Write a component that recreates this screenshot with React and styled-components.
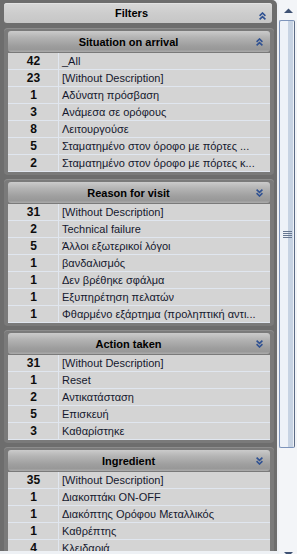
import React from 'react';
import styled, { createGlobalStyle } from 'styled-components';

const GlobalStyle = createGlobalStyle`
  html, body { margin: 0; padding: 0; background: #eef1f5; }
  body { font-family: "Liberation Sans", Arial, sans-serif; font-size: 11px; }
  * { box-sizing: border-box; }
`;

const Window = styled.div`
  display: flex;
  width: 297px;
  height: 554px;
  overflow: hidden;
  background: #eef1f5;
`;

const Panel = styled.div`
  flex: none;
  width: 277px;
  height: 551px;
  overflow: hidden;
  background: #6d6d6d;
  border-top-right-radius: 5px;
  padding: 3px 0 0 4px;
  display: flex;
  flex-direction: column;
  gap: 4px;
`;

const FiltersHeader = styled.div`
  flex: none;
  height: 20px;
  margin-right: 5px;
  margin-bottom: 1px;
  border-radius: 3px;
  background: linear-gradient(to bottom, #d8d8d8 0%, #cdcdcd 50%, #c6c6c6 100%);
  box-shadow: inset 0 1px 0 #e2e2e2;
  display: flex;
  align-items: center;
`;

const Title = styled.div`
  flex: 1;
  text-align: center;
  font-weight: bold;
  font-size: 11px;
  color: #000;
  padding-left: ${p => p.$shift || 0}px;
  white-space: nowrap;
`;

const ChevronBox = styled.div`
  flex: none;
  width: ${p => p.$w}px;
  display: flex;
  justify-content: center;
  align-items: center;
  margin-top: ${p => p.$drop || 0}px;
`;

const SectionFrame = styled.div`
  flex: none;
  margin-right: 3px;
  padding: 3px 4px;
  background: #7a7a7a;
  border-radius: 4px;
  box-shadow: inset 0 1px 0 #8c8c8c;
`;

const SectionHeader = styled.div`
  height: 21px;
  border-radius: 3px;
  background: linear-gradient(to bottom, #cbcbcb 0%, #b4b4b4 30%, #9e9e9e 70%, #989898 88%, #acacac 100%);
  display: flex;
  align-items: center;
`;

const Rows = styled.div`
  margin-top: 1px;
  background: #d4d4d4;
`;

const Row = styled.div`
  height: 17px;
  display: grid;
  grid-template-columns: 50px 1fr;
  border-bottom: 1px solid #e0e6ef;
`;

const Count = styled.div`
  text-align: center;
  font-weight: bold;
  font-size: 12px;
  padding-left: 1px;
  line-height: 16px;
  color: #0d0d0d;
`;

const Label = styled.div`
  border-left: 1px solid #e0e6ef;
  padding-left: 3px;
  font-size: 11px;
  line-height: 16px;
  color: #15182e;
  white-space: nowrap;
  overflow: hidden;
`;

const ScrollBar = styled.div`
  flex: none;
  margin-left: 2px;
  width: 18px;
  height: 554px;
  overflow: hidden;
  background: #f3f5f8;
  display: flex;
  flex-direction: column;
`;

const ScrollButton = styled.div`
  flex: none;
  height: 20px;
  display: flex;
  align-items: center;
  justify-content: center;
  margin-bottom: ${p => (p.$cut ? -10 : 0)}px;
`;

const Thumb = styled.div`
  flex: none;
  height: 428px;
  width: 16px;
  border: 1px solid #7d94bb;
  border-right-color: #5d6c86;
  border-radius: 2px;
  background: linear-gradient(to right, #eef2f8 0, #eef2f8 8px, #c7d3e3 8px, #c7d3e3 13px, #eef2f8 13px);
  display: flex;
  flex-direction: column;
  align-items: center;
  justify-content: center;
  gap: 1px;
`;

const GripLine = styled.div`
  width: 9px;
  height: 1px;
  background: #687892;
  margin-left: 1px;
`;

const Track = styled.div`
  flex: 1;
`;

const Chevron = ({ up }) => (
  <svg width="7" height="8" viewBox="0 0 7 8">
    {up ? (
      <g fill="none" stroke="#2f5192" strokeWidth="1.6">
        <path d="M0.6 3.8 L3.5 1 L6.4 3.8" />
        <path d="M0.6 7.4 L3.5 4.6 L6.4 7.4" />
      </g>
    ) : (
      <g fill="none" stroke="#2f5192" strokeWidth="1.6">
        <path d="M0.6 0.6 L3.5 3.4 L6.4 0.6" />
        <path d="M0.6 4.2 L3.5 7 L6.4 4.2" />
      </g>
    )}
  </svg>
);

const Arrow = ({ up }) => (
  <svg width="9" height="5" viewBox="0 0 9 5">
    <polygon points={up ? '0,5 4.5,0.5 9,5' : '0,0 4.5,4.5 9,0'} fill="#3f5273" />
  </svg>
);

const sections = [
  {
    title: 'Situation on arrival',
    up: true,
    rows: [
      [42, '_All'],
      [23, '[Without Description]'],
      [1, 'Αδύνατη πρόσβαση'],
      [3, 'Ανάμεσα σε ορόφους'],
      [8, 'Λειτουργούσε'],
      [5, 'Σταματημένο στον όροφο με πόρτες ...'],
      [2, 'Σταματημένο στον όροφο με πόρτες κ...'],
    ],
  },
  {
    title: 'Reason for visit',
    up: false,
    rows: [
      [31, '[Without Description]'],
      [2, 'Technical failure'],
      [5, 'Άλλοι εξωτερικοί λόγοι'],
      [1, 'βανδαλισμός'],
      [1, 'Δεν βρέθηκε σφάλμα'],
      [1, 'Εξυπηρέτηση πελατών'],
      [1, 'Φθαρμένο εξάρτημα (προληπτική αντι...'],
    ],
  },
  {
    title: 'Action taken',
    up: false,
    rows: [
      [31, '[Without Description]'],
      [1, 'Reset'],
      [2, 'Αντικατάσταση'],
      [5, 'Επισκευή'],
      [3, 'Καθαρίστηκε'],
    ],
  },
  {
    title: 'Ingredient',
    up: false,
    rows: [
      [35, '[Without Description]'],
      [1, 'Διακοπτάκι ON-OFF'],
      [1, 'Διακόπτης Ορόφου Μεταλλικός'],
      [1, 'Καθρέπτης'],
      [4, 'Κλειδαριά'],
    ],
  },
];

export default function App() {
  return (
    <>
      <GlobalStyle />
      <Window>
        <Panel>
          <FiltersHeader>
            <Title $shift={7}>Filters</Title>
            <ChevronBox $w={20} $drop={5}>
              <Chevron up />
            </ChevronBox>
          </FiltersHeader>
          {sections.map(s => (
            <SectionFrame key={s.title}>
              <SectionHeader>
                <Title>{s.title}</Title>
                <ChevronBox $w={21}>
                  <Chevron up={s.up} />
                </ChevronBox>
              </SectionHeader>
              <Rows>
                {s.rows.map(([n, label], i) => (
                  <Row key={i}>
                    <Count>{n}</Count>
                    <Label>{label}</Label>
                  </Row>
                ))}
              </Rows>
            </SectionFrame>
          ))}
        </Panel>
        <ScrollBar>
          <ScrollButton>
            <Arrow up />
          </ScrollButton>
          <Thumb>
            <GripLine />
            <GripLine />
            <GripLine />
            <GripLine />
          </Thumb>
          <Track />
          <ScrollButton $cut>
            <Arrow />
          </ScrollButton>
        </ScrollBar>
      </Window>
    </>
  );
}
